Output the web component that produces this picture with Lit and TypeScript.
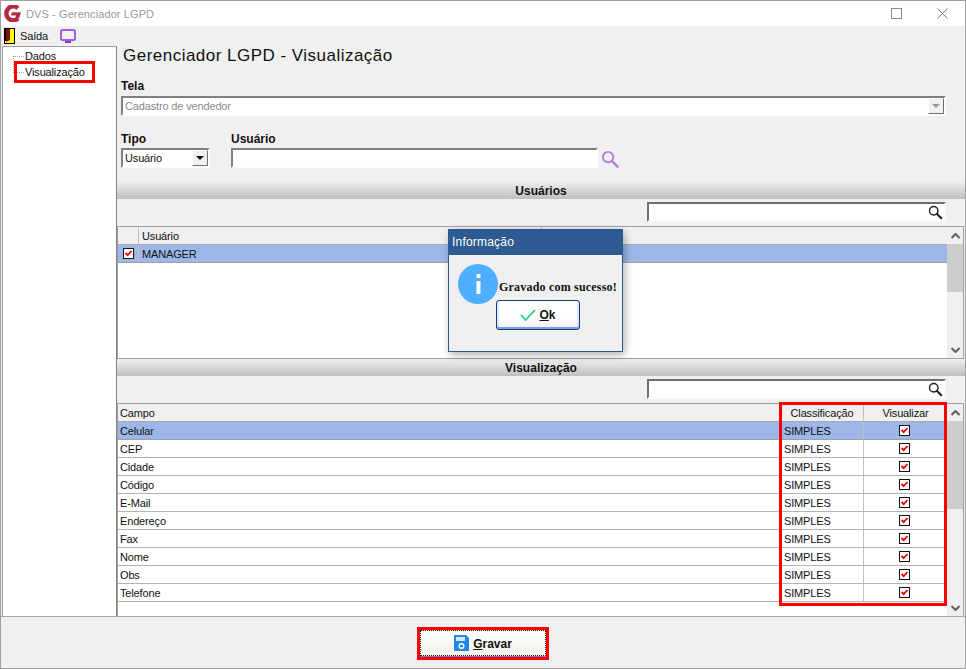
import { LitElement, html, css } from "lit";
import { customElement } from "lit/decorators.js";

const check = html`<svg class="chk" width="11" height="11" viewBox="0 0 11 11"><rect x=".5" y=".5" width="10" height="10" fill="#fff" stroke="#111"/><path d="M2.5 5l2.2 2.2L8.5 3" fill="none" stroke="#f00" stroke-width="1.8"/></svg>`;
const lens = html`<svg width="15" height="15" viewBox="0 0 17 17"><circle cx="6.5" cy="6.5" r="4.8" fill="none" stroke="#222" stroke-width="1.6"/><path d="M10 10l5 5" stroke="#222" stroke-width="2.4" stroke-linecap="round"/></svg>`;
const campos = ["Celular","CEP","Cidade","Código","E-Mail","Endereço","Fax","Nome","Obs","Telefone"];

@customElement("app-root")
export class AppRoot extends LitElement {
  static styles = css`
    :host { display:block; width:966px; height:669px; position:relative; overflow:hidden; background:#f0f0f0; font-family:"Liberation Sans",Arial,sans-serif; font-size:11px; letter-spacing:-.15px; color:#111; }
    .win { box-sizing:border-box; width:966px; height:669px; border:1px solid #a0a0a0; display:flex; flex-direction:column; }
    .title { height:25px; background:#fff; display:flex; align-items:center; padding-left:3px; color:#999; font-size:11px; letter-spacing:.1px; flex:none; }
    .title span { margin-left:5px; }
    .title .sp { flex:1; }
    .wb { width:46px; display:flex; justify-content:center; }
    .tools { height:20px; flex:none; display:flex; align-items:center; padding-left:3px; }
    .tools .s { margin:0 12px 0 5px; }
    .main { height:570px; flex:none; display:flex; padding-left:1px; }
    .tree { box-sizing:border-box; width:115px; flex:none; border:1px solid #a0a0a0; border-bottom:0; border-right-color:#808080; background:#fff; padding:1px 0 0 22px; position:relative; }
    .tree .it { height:16px; line-height:16px; }
    .dots { position:absolute; left:10px; top:9px; width:11px; height:17px; border-left:1px dotted #aaa; border-bottom:1px dotted #aaa; box-sizing:border-box; }
    .dots::before { content:""; position:absolute; left:0; top:0; width:10px; border-top:1px dotted #aaa; }
    .redtree { position:absolute; left:11px; top:14px; width:81px; height:22px; box-sizing:border-box; border:3px solid #f00; }
    .right { flex:1; min-width:0; display:flex; flex-direction:column; }
    .right > * { flex:none; }
    h1 { margin:0; font-weight:400; font-size:17px; line-height:20px; padding-left:6px; height:20px; letter-spacing:.48px; display:flex; align-items:center; }
    label { display:block; font-weight:700; font-size:12px; letter-spacing:0; line-height:13px; }
    .pad { padding-left:4px; padding-right:19px; margin-top:14px; }
    .combo { box-sizing:border-box; height:20px; background:#fff; border:2px solid; border-color:#808080 #fdfdfd #fdfdfd #808080; display:flex; align-items:center; }
    .combo .t { flex:1; padding-left:2px; }
    .dis { color:#8a8a8a; margin-top:3px; }
    .ddb { width:16px; height:16px; box-sizing:border-box; background:#f0f0f0; border:1px solid; border-color:#fff #707070 #707070 #fff; display:flex; align-items:center; justify-content:center; }
    .tri { width:0; height:0; border:4px solid transparent; border-top:4px solid #111; border-bottom:0; }
    .tri.g { border-top-color:#999; }
    .row { display:flex; margin-top:17px; padding-left:4px; height:35px; }
    .tipo { width:89px; margin-right:21px; }
    .user { width:367px; }
    .row .combo { margin-top:2px; }
    .lensp { margin:17px 0 0 3px; }
    .sec { height:18px; background:linear-gradient(#f0f0f0,#bfbfbf); font-weight:700; font-size:12px; letter-spacing:0; line-height:20px; text-align:center; }
    .s1 { margin-top:13px; }
    .s2 { height:17px; line-height:19px; }
    .find { box-sizing:border-box; width:299px; height:20px; background:#fff; border:2px solid; border-color:#707070 #fafafa #fafafa #707070; display:flex; justify-content:flex-end; align-items:center; padding-right:1px; }
    .findw { display:flex; justify-content:flex-end; padding-right:19px; margin-top:3px; }
    .grid { box-sizing:border-box; background:#fff; border:1px solid #a0a0a0; margin:4px 1px 0 0; display:flex; }
    .g1 { height:133px; }
    .g2 { height:213px; border-bottom:0; }
    .gc { flex:1; min-width:0; }
    .hd,.tr { display:flex; height:18px; box-sizing:border-box; border-bottom:1px solid #b4b4b4; line-height:19px; }
    .hd { background:#f0f0f0; border-bottom-color:#a8a8a8; }
    .c { box-sizing:border-box; border-right:1px solid #c0c0c0; padding-left:3px; white-space:nowrap; overflow:hidden; }
    .c0 { width:21px; }
    .c1 { width:403px; }
    .campo { width:663px; padding-left:2px; }
    .cls { width:83px; }
    .chead { text-align:center; padding:0; }
    .fill { flex:1; border-right:0; }
    .sel { background:#9db8e8; border-bottom-color:#a0a0a0; }
    .ctr { padding:0; display:flex; justify-content:center; align-items:center; }
    .ctr2 { padding-right:2px; }
    .sb { width:16px; flex:none; background:#f0f0f0; display:flex; flex-direction:column; align-items:center; }
    .sb .arrow { flex:none; height:17px; display:flex; align-items:center; justify-content:center; }
    .thumb { background:#cdcdcd; width:16px; flex:none; }
    .sp { flex:1; }
    .foot { height:52px; flex:none; border-top:1px solid #a8a8a8; display:flex; justify-content:center; align-items:center; padding-top:2px; box-sizing:border-box; }
    .gravar { box-sizing:border-box; width:132px; height:33px; border:3px solid #f00; background:#fff; }
    .gin { box-sizing:border-box; width:100%; height:26px; border:1px dotted #111; background:linear-gradient(#fff,#f2f0ec); display:flex; align-items:center; justify-content:center; gap:4px; font-weight:700; font-size:12px; letter-spacing:0; box-shadow:0 1px 0 #6a80d8; }
    .gin span { padding-top:1px; }
    u { text-decoration:underline; }
    .redcols { position:absolute; left:779px; top:402px; width:168px; height:204px; box-sizing:border-box; border:3px solid #f00; pointer-events:none; }
    .dlg { position:absolute; left:448px; top:229px; width:175px; height:123px; box-sizing:border-box; background:#f0f0f0; border:1px solid #2b5a91; box-shadow:2px 3px 8px rgba(0,0,0,.3); display:flex; flex-direction:column; }
    .dt { height:25px; background:#2d5a90; color:#fff; font-size:12px; line-height:25px; padding-left:3px; letter-spacing:.2px; flex:none; }
    .db { flex:1; display:flex; flex-direction:column; align-items:center; }
    .dmsg { display:flex; align-items:center; width:100%; padding:9px 0 0 9px; box-sizing:border-box; height:49px; }
    .circle { width:40px; height:40px; border-radius:50%; background:#4eaeff; flex:none; display:flex; align-items:center; justify-content:center; }
    .m { font-family:"Liberation Serif",serif; font-weight:700; font-size:12px; letter-spacing:.2px; margin:7px 0 0 1px; white-space:nowrap; }
    .ok { box-sizing:border-box; width:84px; height:30px; margin:-4px 0 0 5px; border:1px solid #0f3f7a; border-radius:3px; background:linear-gradient(#fff 60%,#eef0f8); box-shadow:inset 0 -2px 0 #7f9fe0, inset 2px 0 0 #dfe7fa, inset -2px 0 0 #dfe7fa; display:flex; align-items:center; justify-content:center; gap:3px; font-weight:700; font-size:12px; letter-spacing:0; }
  `;
  render() {
    return html`
    <div class="win">
      <div class="title">
        <svg width="17" height="17" viewBox="0 0 17 17"><path d="M14 3.2A7 7 0 1 0 14 13.6" fill="none" stroke="#b5293f" stroke-width="4.4"/><path d="M8 7.2h9l-2 6.3h-4l1-3H7z" fill="#b5293f"/><path d="M8 6.6h9" stroke="#fff" stroke-width="1"/></svg>
        <span>DVS - Gerenciador LGPD</span>
        <div class="sp"></div>
        <div class="wb"><svg width="11" height="11"><rect x=".5" y=".5" width="10" height="10" fill="none" stroke="#888"/></svg></div>
        <div class="wb"><svg width="11" height="11"><path d="M.5.5l10 10M10.5.5l-10 10" stroke="#777" fill="none"/></svg></div>
      </div>
      <div class="tools">
        <svg width="11" height="16" viewBox="0 0 11 16"><rect width="11" height="16" fill="#000"/><path d="M4 1h6v14H1v-2h3z" fill="#ff0"/><path d="M2 1h4v11l-4 2z" fill="#801010"/></svg>
        <span class="s">Saída</span>
        <svg width="16" height="14" viewBox="0 0 16 14"><rect x="1" y="1" width="14" height="10" rx="1" fill="none" stroke="#8a2be2" stroke-width="1.5"/><path d="M5 13h6" stroke="#8a2be2" stroke-width="2"/></svg>
      </div>
      <div class="main">
        <div class="tree">
          <div class="dots"></div>
          <div class="it">Dados</div><div class="it">Visualização</div>
          <div class="redtree"></div>
        </div>
        <div class="right">
          <h1>Gerenciador LGPD - Visualização</h1>
          <div class="pad">
            <label>Tela</label>
            <div class="combo dis"><div class="t">Cadastro de vendedor</div><div class="ddb"><div class="tri g"></div></div></div>
          </div>
          <div class="row">
            <div class="tipo"><label>Tipo</label><div class="combo"><div class="t">Usuário</div><div class="ddb"><div class="tri"></div></div></div></div>
            <div class="user"><label>Usuário</label><div class="combo"></div></div>
            <svg class="lensp" width="18" height="18" viewBox="0 0 19 19"><circle cx="7.5" cy="7.5" r="5.5" fill="none" stroke="#b57edc" stroke-width="2"/><path d="M12 12l5.5 5.5" stroke="#b57edc" stroke-width="2.5" stroke-linecap="round"/></svg>
          </div>
          <div class="sec s1">Usuários</div>
          <div class="findw"><div class="find">${lens}</div></div>
          <div class="grid g1">
            <div class="gc">
              <div class="hd"><div class="c c0"></div><div class="c c1">Usuário</div><div class="c fill"></div></div>
              <div class="tr sel"><div class="c c0 ctr">${check}</div><div class="c fill">MANAGER</div></div>
            </div>
            ${this.sb(48)}
          </div>
          <div class="sec s2">Visualização</div>
          <div class="findw"><div class="find">${lens}</div></div>
          <div class="grid g2">
            <div class="gc">
              <div class="hd"><div class="c campo">Campo</div><div class="c cls chead">Classificação</div><div class="c fill chead">Visualizar</div></div>
              ${campos.map((c,i)=>html`<div class="tr ${i===0?"sel":""}"><div class="c campo">${c}</div><div class="c cls">SIMPLES</div><div class="c fill ctr ctr2">${check}</div></div>`)}
            </div>
            ${this.sb(88)}
          </div>
        </div>
      </div>
      <div class="foot">
        <div class="gravar"><div class="gin">
          <svg width="15" height="16" viewBox="0 0 15 16"><path d="M0 0h12l3 3v13H0z" fill="#1e88e5"/><rect x="2" y="2" width="9" height="4" fill="#cfe6fa"/><circle cx="7.5" cy="11" r="2.3" fill="none" stroke="#fff" stroke-width="1.4"/></svg>
          <span><u>G</u>ravar</span>
        </div></div>
      </div>
    </div>
    <div class="redcols"></div>
    <div class="dlg">
      <div class="dt">Informação</div>
      <div class="db">
        <div class="dmsg">
          <div class="circle"><svg width="5" height="20" viewBox="0 0 5 20"><rect x=".5" width="4" height="4" fill="#fff"/><rect x=".5" y="7" width="4" height="13" fill="#fff"/></svg></div>
          <div class="m">Gravado com sucesso!</div>
        </div>
        <div class="ok">
          <svg width="16" height="12" viewBox="0 0 16 12"><path d="M1 6l4.5 5L15 1" fill="none" stroke="#1ed27a" stroke-width="1.8"/></svg>
          <span><u>O</u>k</span>
        </div>
      </div>
    </div>`;
  }
  sb(thumb: number) {
    return html`<div class="sb">
      <div class="arrow"><svg width="9" height="6"><path d="M.5 5L4.5 1l4 4" fill="none" stroke="#606060" stroke-width="2"/></svg></div>
      <div class="thumb" style="height:${thumb}px"></div>
      <div class="sp"></div>
      <div class="arrow"><svg width="9" height="6"><path d="M.5 1l4 4 4-4" fill="none" stroke="#606060" stroke-width="2"/></svg></div>
    </div>`;
  }
}
